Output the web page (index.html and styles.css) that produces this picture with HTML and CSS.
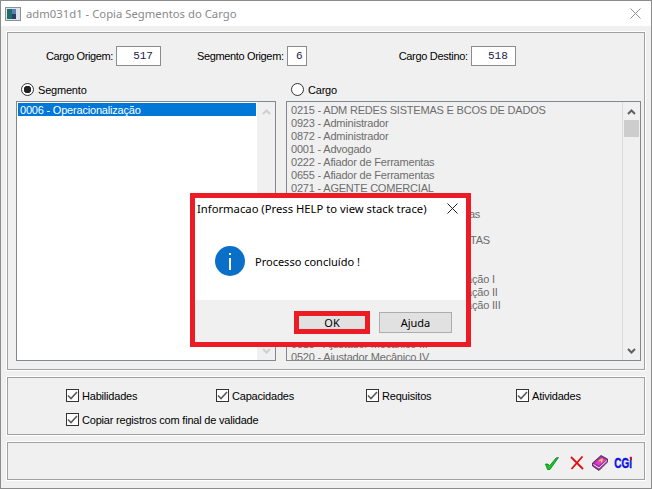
FILE: index.html
```html
<!DOCTYPE html>
<html lang="pt">
<head>
    <meta charset="UTF-8">
    <title>adm031d1 - Copia Segmentos do Cargo</title>
    <link rel="stylesheet" href="styles.css">
</head>
<body>
    <div class="window">
        <div class="titlebar">
            <svg class="app-icon" width="16" height="16" viewBox="0 0 16 16">
                <rect x="0.5" y="1.5" width="15" height="13" fill="#dfe3e6" stroke="#8a9096"/>
                <rect x="2" y="3" width="5" height="10" fill="#1d6f6a"/>
                <rect x="7" y="3" width="4" height="5" fill="#5b7fb8"/>
                <rect x="7" y="8" width="4" height="5" fill="#2d3f66"/>
            </svg>
            <span class="title-text">adm031d1 - Copia Segmentos do Cargo</span>
            <svg class="close-x" width="11" height="11" viewBox="0 0 11 11">
                <path d="M0.5 0.5 L10.5 10.5 M10.5 0.5 L0.5 10.5" stroke="#8f8f8f" stroke-width="1" fill="none"/>
            </svg>
        </div>

        <div class="content">
            <div class="panel panel-main">
                <div class="origin-row">
                    <label class="field field-cargo">Cargo Origem:<span class="num-box box-45">517</span></label>
                    <label class="field field-seg">Segmento Origem:<span class="num-box box-20">6</span></label>
                    <label class="field field-dest">Cargo Destino:<span class="num-box box-45">518</span></label>
                </div>

                <div class="lists">
                    <div class="list-col col-left">
                        <div class="radio-row"><span class="radio radio-on"></span>Segmento</div>
                        <div class="listbox">
                            <div class="list-items">
                                <div class="item-selected">0006 - Operacionalização</div>
                            </div>
                            <div class="scroll scroll-off">
                                <svg class="arrow" width="9" height="6" viewBox="0 0 9 6"><path d="M1 5 L4.5 1.5 L8 5" stroke="#cfcfcf" stroke-width="2" fill="none"/></svg>
                                <svg class="arrow" width="9" height="6" viewBox="0 0 9 6"><path d="M1 1 L4.5 4.5 L8 1" stroke="#cfcfcf" stroke-width="2" fill="none"/></svg>
                            </div>
                        </div>
                    </div>
                    <div class="list-col col-right">
                        <div class="radio-row"><span class="radio"></span>Cargo</div>
                        <div class="listbox listbox-off">
                            <div class="list-items items-off">
                                <div>0215 - ADM REDES SISTEMAS E BCOS DE DADOS</div>
                                <div>0923 - Administrador</div>
                                <div>0872 - Administrador</div>
                                <div>0001 - Advogado</div>
                                <div>0222 - Afiador de Ferramentas</div>
                                <div>0655 - Afiador de Ferramentas</div>
                                <div>0271 - AGENTE COMERCIAL</div>
                                <div>0272 - Agente de Compras</div>
                                <div>0273 - Agente de Manutenção de Peças</div>
                                <div>0274 - Agente de Planejamento</div>
                                <div>0275 - AGENTE DE COMPRAS E PJ TAS</div>
                                <div>0276 - Ajudante Geral</div>
                                <div>0277 - Ajudante de Produção</div>
                                <div>0278 - Ajustador Técnico de Programação I</div>
                                <div>0279 - Ajustador Técnico de Programação II</div>
                                <div>0280 - Ajustador Técnico de Programação III</div>
                                <div>0516 - Ajustador Mecânico</div>
                                <div>0517 - Ajustador Mecânico I</div>
                                <div>0518 - Ajustador Mecânico III</div>
                                <div>0520 - Ajustador Mecânico IV</div>
                            </div>
                            <div class="scroll">
                                <svg class="arrow" width="9" height="6" viewBox="0 0 9 6"><path d="M1 5 L4.5 1.5 L8 5" stroke="#606060" stroke-width="2" fill="none"/></svg>
                                <div class="thumb"></div>
                                <svg class="arrow arrow-down" width="9" height="6" viewBox="0 0 9 6"><path d="M1 1 L4.5 4.5 L8 1" stroke="#606060" stroke-width="2" fill="none"/></svg>
                            </div>
                        </div>
                    </div>
                </div>
            </div>

            <div class="panel panel-checks">
                <div class="checks-row">
                    <label class="check check-150"><span class="box"><svg width="11" height="11" viewBox="0 0 11 11"><path d="M1 5.5 L4 8.5 L10 2" stroke="#5a5a5a" stroke-width="1.6" fill="none"/></svg></span>Habilidades</label>
                    <label class="check check-150"><span class="box"><svg width="11" height="11" viewBox="0 0 11 11"><path d="M1 5.5 L4 8.5 L10 2" stroke="#5a5a5a" stroke-width="1.6" fill="none"/></svg></span>Capacidades</label>
                    <label class="check check-150"><span class="box"><svg width="11" height="11" viewBox="0 0 11 11"><path d="M1 5.5 L4 8.5 L10 2" stroke="#5a5a5a" stroke-width="1.6" fill="none"/></svg></span>Requisitos</label>
                    <label class="check"><span class="box"><svg width="11" height="11" viewBox="0 0 11 11"><path d="M1 5.5 L4 8.5 L10 2" stroke="#5a5a5a" stroke-width="1.6" fill="none"/></svg></span>Atividades</label>
                </div>
                <label class="check"><span class="box"><svg width="11" height="11" viewBox="0 0 11 11"><path d="M1 5.5 L4 8.5 L10 2" stroke="#5a5a5a" stroke-width="1.6" fill="none"/></svg></span>Copiar registros com final de validade</label>
            </div>

            <div class="panel panel-tools">
                <svg class="tool-ok" width="14" height="13" viewBox="0 0 14 13"><path d="M0.5 7 L3 7 L4.5 9 L11 1 L13.5 0.5 L5 12.5 L2.5 12.5 Z" fill="#10d010" stroke="#063" stroke-width="0.7"/></svg>
                <svg class="tool-no" width="14" height="14" viewBox="0 0 14 14"><path d="M1 1 L13 13 M12.5 0.5 L1.5 13" stroke="#e01010" stroke-width="1.8" fill="none"/></svg>
                <svg class="tool-book" width="16" height="16" viewBox="0 0 16 16"><path d="M0.5 8 L9 0.5 L15.5 4 L15.5 7 L7 15.5 L0.5 11 Z" fill="#a030a0" stroke="#402040" stroke-width="0.8"/><path d="M3 8 L9 2.5 L14 5 L7 10.5 Z" fill="#e040d0"/><path d="M7 6 L10 4.5 L9.5 7.5" stroke="#f0e020" stroke-width="1.3" fill="none"/><path d="M1.5 9.5 L7 13 L15 5.5" stroke="#fff" stroke-width="0.9" fill="none"/></svg>
                <span class="cgi">CGi</span>
            </div>
        </div>

        <div class="dialog">
            <div class="dialog-title">
                <span>Informacao (Press HELP to view stack trace)</span>
                <svg width="11" height="11" viewBox="0 0 11 11"><path d="M0.5 0.5 L10.5 10.5 M10.5 0.5 L0.5 10.5" stroke="#222" stroke-width="1" fill="none"/></svg>
            </div>
            <div class="dialog-body">
                <svg width="30" height="30" viewBox="0 0 30 30">
                    <circle cx="15" cy="15" r="15" fill="#0a6fc9"/>
                    <rect x="14" y="12" width="2" height="12" fill="#fff"/>
                    <rect x="14" y="7" width="2" height="2" fill="#fff"/>
                </svg>
                <span>Processo concluído !</span>
            </div>
            <div class="dialog-actions">
                <span class="ok-mark"><button class="btn btn-ok">OK</button></span>
                <button class="btn">Ajuda</button>
            </div>
        </div>
    </div>
</body>
</html>
```

FILE: styles.css
```css
html, body {
    margin: 0;
    padding: 0;
}

body {
    width: 652px;
    height: 489px;
    overflow: hidden;
    background-color: #f0f0f0;
    font-family: 'Liberation Sans', Arial, sans-serif;
    font-size: 11px;
    letter-spacing: -0.2px;
    color: #000;
}

.window {
    position: relative;
    height: 489px;
    border: 1px solid #8c8c8c;
    box-sizing: border-box;
    background-color: #f0f0f0;
}

.titlebar {
    display: flex;
    align-items: center;
    height: 25px;
    padding: 0 10px 0 4px;
    background-color: #fff;
}

.app-icon {
    margin-right: 5px;
}

.title-text {
    flex: 1;
    color: #8a8a8a;
    font-family: 'Noto Sans', sans-serif;
    font-size: 11.3px;
    letter-spacing: 0;
}

.content {
    display: flex;
    flex-direction: column;
    gap: 7px;
    padding: 6px 6px 0;
}

.panel {
    border: 1px solid #a0a0a0;
    box-shadow: 0 0 0 1px #fff;
    box-sizing: border-box;
    background-color: #f0f0f0;
}

.panel-main {
    height: 338px;
    padding: 13px 0 0 8px;
}

.origin-row {
    display: flex;
    height: 20px;
    align-items: center;
}

.field {
    display: flex;
    align-items: center;
    gap: 3px;
}

.field-cargo {
    margin-left: 30px;
    letter-spacing: -0.4px;
}

.field-seg {
    margin-left: 36px;
    letter-spacing: -0.35px;
}

.field-dest {
    margin-left: 92px;
    letter-spacing: -0.3px;
}

.num-box {
    height: 20px;
    box-sizing: border-box;
    border: 1px solid #8c8c8c;
    background-color: #fff;
    padding-right: 7px;
    text-align: right;
    font-family: 'Liberation Mono', monospace;
    font-size: 11px;
    letter-spacing: 0;
    line-height: 18px;
    color: #1a1a50;
}

.box-45 {
    width: 45px;
}

.box-20 {
    width: 20px;
    padding-right: 3px;
}

.lists {
    display: flex;
    gap: 10px;
    margin-top: 15px;
}

.list-col {
    display: flex;
    flex-direction: column;
    gap: 3px;
}

.col-left {
    width: 260px;
}

.col-right {
    width: 355px;
}

.radio-row {
    display: flex;
    align-items: center;
    gap: 4px;
    height: 17px;
    padding-left: 5px;
}

.radio {
    width: 13px;
    height: 13px;
    box-sizing: border-box;
    border: 1px solid #333;
    border-radius: 50%;
    background-color: #fff;
}

.radio-on {
    background: radial-gradient(circle, #222 0, #222 3.5px, #fff 4px);
}

.listbox {
    display: flex;
    height: 260px;
    border: 1px solid #828790;
    background-color: #fff;
    box-sizing: border-box;
    overflow: hidden;
}

.listbox-off {
    background-color: #f0f0f0;
}

.list-items {
    flex: 1;
    padding: 1px;
    line-height: 13px;
    overflow: hidden;
}

.items-off {
    padding: 2px 1px 0 4px;
    color: #6d6d6d;
    white-space: nowrap;
}

.item-selected {
    height: 13px;
    padding-left: 2px;
    line-height: 14px;
    background-color: #0078d7;
    color: #fff;
}

.scroll {
    display: flex;
    flex-direction: column;
    align-items: center;
    width: 18px;
    padding-top: 7px;
    box-sizing: border-box;
    border-left: 1px solid #dcdcdc;
    background-color: #f0f0f0;
}

.scroll-off {
    justify-content: space-between;
    padding-bottom: 6px;
    border-left: 0;
}

.thumb {
    width: 15px;
    height: 17px;
    margin-top: 5px;
    background-color: #cdcdcd;
}

.arrow-down {
    margin-top: auto;
    margin-bottom: 6px;
}

.panel-checks {
    height: 58px;
    padding: 11px 0 0 58px;
}

.checks-row {
    display: flex;
    margin-bottom: 11px;
}

.check {
    display: flex;
    align-items: center;
    gap: 3px;
    height: 13px;
}

.check-150 {
    width: 150px;
}

.box {
    display: flex;
    align-items: center;
    justify-content: center;
    width: 13px;
    height: 13px;
    box-sizing: border-box;
    border: 1px solid #333;
    background-color: #fff;
}

.panel-tools {
    display: flex;
    align-items: center;
    justify-content: flex-end;
    height: 38px;
    padding: 4px 12px 0 0;
}

.tool-no {
    margin-left: 11px;
}

.tool-book {
    margin-left: 8px;
}

.cgi {
    display: inline-block;
    position: relative;
    margin-left: 6px;
    color: #0a10e8;
    font-family: 'Liberation Sans', sans-serif;
    font-size: 10px;
    font-weight: bold;
    letter-spacing: 0;
    -webkit-text-stroke: 0.3px #0a10e8;
    transform: scaleY(1.4);
}

/* red dot on the i */
.cgi::after {
    content: "";
    position: absolute;
    right: 0;
    top: 1px;
    width: 2px;
    height: 2px;
    background-color: #e01010;
}

/* message box over the window */
.dialog {
    position: absolute;
    left: 189px;
    top: 192px;
    width: 281px;
    height: 154px;
    box-sizing: border-box;
    border: 5px solid #ed1c24;
    background-color: #fff;
    display: flex;
    flex-direction: column;
    font-family: 'Noto Sans', sans-serif;
    font-size: 11px;
    letter-spacing: 0;
}

.dialog-title {
    display: flex;
    justify-content: space-between;
    align-items: center;
    height: 20px;
    padding: 0 8px 0 2px;
    font-size: 11.25px;
}

.dialog-body {
    display: flex;
    align-items: center;
    gap: 10px;
    height: 82px;
    padding: 4px 0 0 20px;
    box-sizing: border-box;
}

.dialog-actions {
    flex: 1;
    display: flex;
    align-items: center;
    justify-content: flex-end;
    gap: 9px;
    padding: 2px 14px 0 0;
    background-color: #f0f0f0;
}

.ok-mark {
    display: flex;
    border: 5px solid #ed1c24;
}

.btn {
    width: 73px;
    height: 21px;
    padding: 0;
    border: 1px solid #adadad;
    border-radius: 0;
    background-color: #e1e1e1;
    font-family: 'Noto Sans', sans-serif;
    font-size: 11px;
    color: #000;
}

.btn-ok {
    width: 66px;
    height: 13px;
    line-height: 13px;
    border: 0;
}
```
